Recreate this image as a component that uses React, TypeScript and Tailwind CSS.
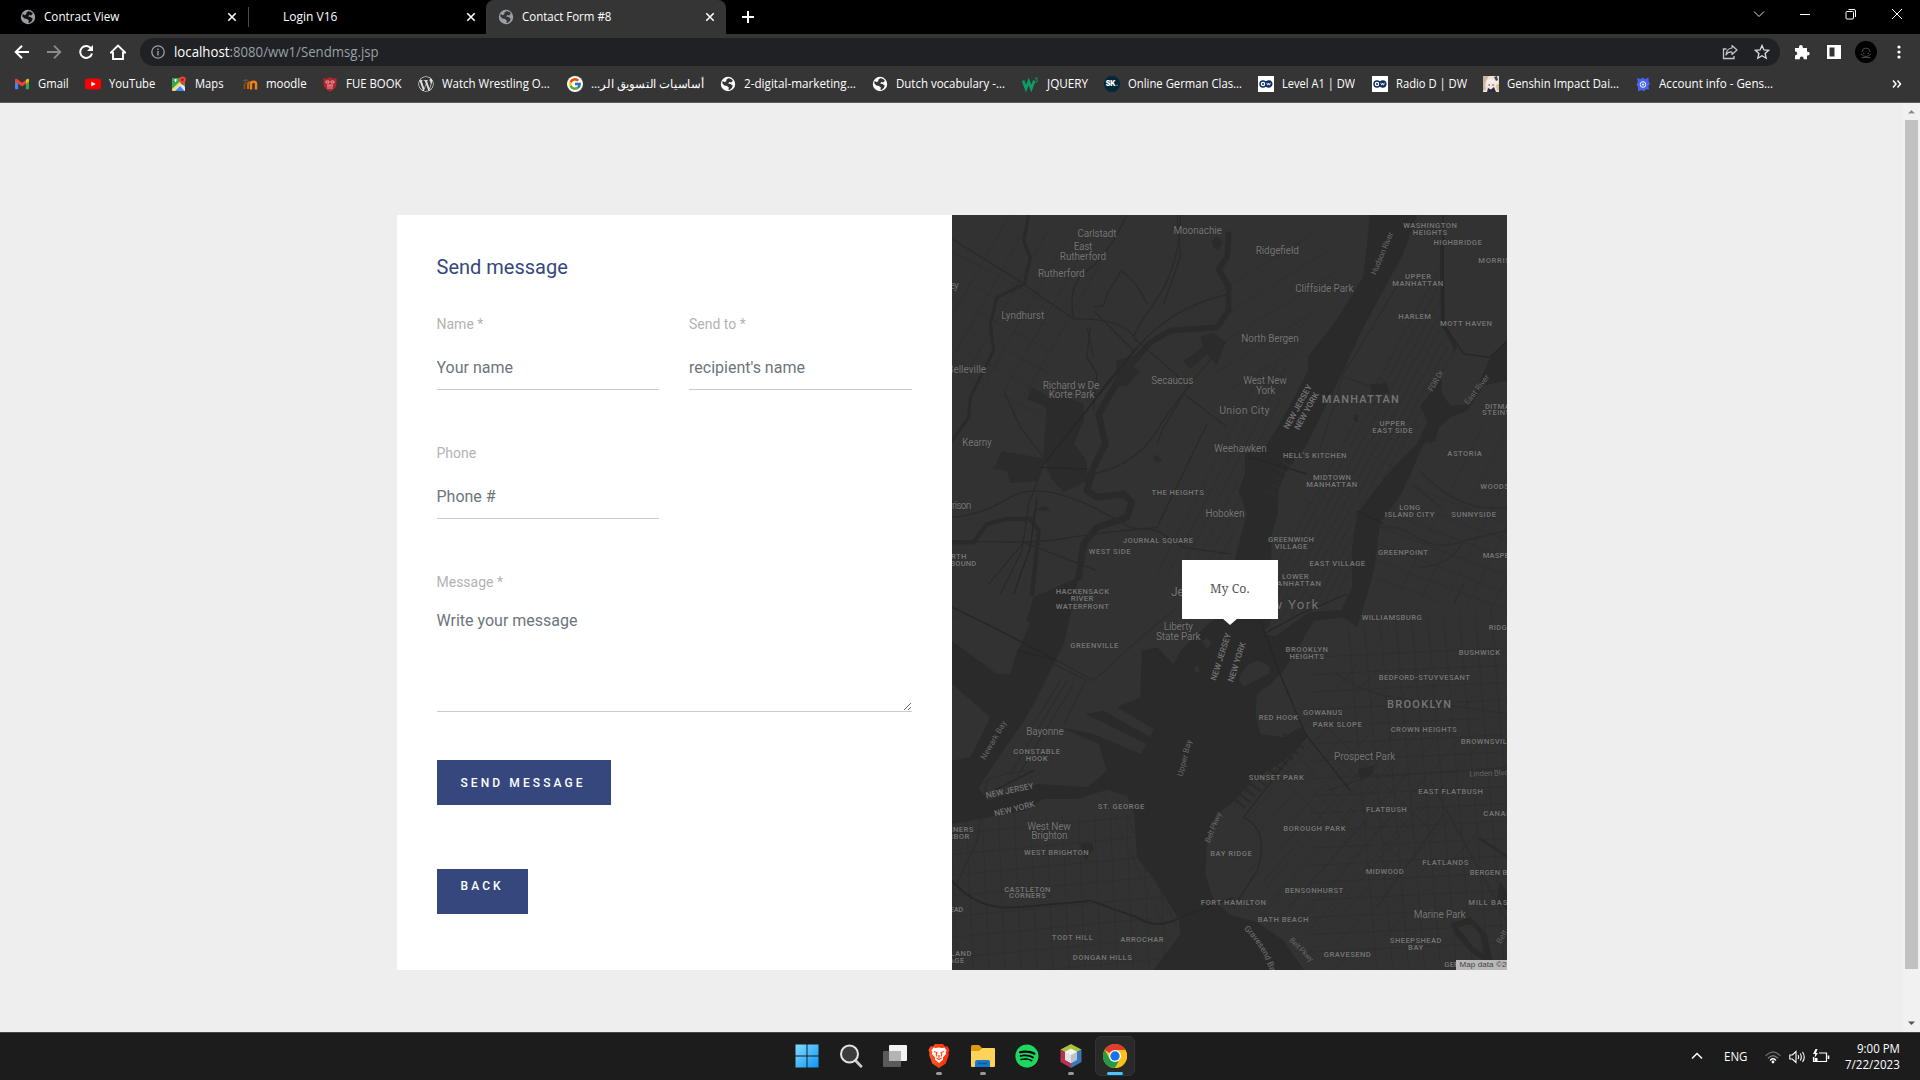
import { useLayoutEffect, useRef, useState, type ReactNode } from "react";
import { FaWordpressSimple, FaSpotify } from "react-icons/fa";
import { FcGoogle } from "react-icons/fc";

/* Text squeezed or stretched horizontally so that it occupies exactly `w` pixels. */
function Fit({ w, children, className = "" }: { w: number; children: ReactNode; className?: string }) {
  const ref = useRef<HTMLSpanElement>(null);
  const [k, setK] = useState(1);
  useLayoutEffect(() => {
    if (ref.current) setK(w / ref.current.offsetWidth);
  }, [w]);
  return (
    <span className={`block shrink-0 whitespace-nowrap ${className}`} style={{ width: w }}>
      <span ref={ref} className="inline-block origin-left" style={{ transform: `scaleX(${k})` }}>
        {children}
      </span>
    </span>
  );
}

/* ---------- browser icons ---------- */

function Globe({ disc, land }: { disc: string; land: string }) {
  return (
    <svg width="16" height="16" viewBox="0 0 16 16" className="shrink-0">
      <circle cx="8" cy="8" r="7.2" fill={disc} />
      <path d="M8.2 2.2c1.8-.3 3.600.8 4.700 2.300L11.200 6.400 9.300 6 8.200 7.400l2.300.7 2.200 1.500-.8 2.300-2.500 2.200-.9-.2.3-2.300-1.800-1.600-2.600-.5L2.200 7.300l.5-2.200L4.900 6.300l1.400-1.200.2-1.600z" fill={land} />
    </svg>
  );
}

function CloseX() {
  return (
    <svg width="16" height="16" viewBox="0 0 16 16" className="shrink-0">
      <path d="M4.300 4.300l7.400 7.400M11.700 4.300l-7.400 7.400" stroke="#fff" strokeWidth="1.600" />
    </svg>
  );
}

function Gmail() {
  return (
    <svg width="16" height="16" viewBox="0 0 16 16" className="shrink-0">
      <path d="M1 4v8.200c0 .6.400 1 1 1h2.200V6.500z" fill="#4285f4" />
      <path d="M15 4v8.200c0 .6-.4 1-1 1h-2.200V6.500z" fill="#34a853" />
      <path d="M11.800 4L13 3.100c.9-.6 2 0 2 1v1.300l-3.200 2.400z" fill="#fbbc04" />
      <path d="M1 4.100c0-1 1.100-1.600 2-1L8 6.800l3.800-2.900v3.800L8 10.600 1 5.400z" fill="#ea4335" />
    </svg>
  );
}

function YouTube() {
  return (
    <svg width="16" height="16" viewBox="0 0 16 16" className="shrink-0">
      <rect x="0" y="2.500" width="16" height="11" rx="3" fill="#f00" />
      <path d="M6.300 5.500v5l4.300-2.500z" fill="#fff" />
    </svg>
  );
}

function Maps() {
  return (
    <svg width="16" height="16" viewBox="0 0 16 16" className="shrink-0">
      <rect x="1" y="2" width="13" height="13" rx="1" fill="#34a853" />
      <path d="M1 13.500L9 6l5 5v4H3z" fill="#e8eaed" />
      <path d="M4 15l5-5 4.500 5z" fill="#4285f4" />
      <path d="M1 13L11 3.500 12.500 5 3 15H2a1 1 0 0 1-1-1z" fill="#fdd663" />
      <path d="M3 4h3M4.500 3v3" stroke="#fff" />
      <path d="M11.500.5a3.300 3.300 0 0 1 3.300 3.300c0 2.500-3.300 5.400-3.300 5.400S8.200 6.300 8.200 3.800A3.300 3.300 0 0 1 11.500.5z" fill="#ea4335" />
      <circle cx="11.500" cy="3.800" r="1.200" fill="#8c1d18" />
    </svg>
  );
}

function Moodle() {
  return (
    <svg width="17" height="16" viewBox="0 0 17 16" className="shrink-0">
      <path d="M1 5l4-2 3 1.500-4 1z" fill="#555" />
      <path d="M3.500 13V7.500" stroke="#8a4d18" strokeWidth="1.800" fill="none" />
      <path d="M7 13V8q0-1.800 2-1.800" stroke="#c46a1a" strokeWidth="2" fill="none" />
      <path d="M10 13.500V7.800q0-2 2.500-2t2.500 2v5.700" stroke="#f98012" strokeWidth="2.400" fill="none" />
      <path d="M3.500 7.500Q5 6 7.500 7" stroke="#8a4d18" strokeWidth="1.300" fill="none" />
    </svg>
  );
}

function Shield() {
  return (
    <svg width="16" height="16" viewBox="0 0 16 16" className="shrink-0">
      <path d="M1.500 2l3 .8L8 1l3.500 1.800 3-.8v5.500c0 4-3 6.500-6.500 8-3.500-1.500-6.500-4-6.500-8z" fill="#b3262d" />
      <path d="M4 5h3v2H4zM9 5h3v2H9zM5 9h6M6 9v4M8 9v4M10 9v4" stroke="#e9b9bb" strokeWidth=".8" fill="none" />
    </svg>
  );
}

function W3() {
  return (
    <svg width="17" height="16" viewBox="0 0 17 16" className="shrink-0">
      <path d="M1 4.500l3 8 2.700-7 2.600 7 3-8" stroke="#0c9d62" strokeWidth="2.700" fill="none" />
      <path d="M13 2h2.500L14 3.800q2 .2 1.500 1.500t-2.500.6" stroke="#0c9d62" strokeWidth=".9" fill="none" />
    </svg>
  );
}

function Sk() {
  return (
    <span className="flex size-4 shrink-0 items-center justify-center rounded-full bg-[#04263a] font-['Inter'] text-[7px] font-black text-white">
      SK<span className="text-[#2bd9a0]">.</span>
    </span>
  );
}

function Dw() {
  return (
    <svg width="16" height="16" viewBox="0 0 16 16" className="shrink-0">
      <rect width="16" height="16" fill="#fff" />
      <circle cx="5" cy="8" r="3" fill="none" stroke="#0d2d63" strokeWidth="1.400" />
      <circle cx="5" cy="8" r="1" fill="#0d2d63" />
      <circle cx="10.800" cy="8" r="3.700" fill="#0d2d63" />
      <path d="M8.800 6.800l.9 2.400.9-2.200.9 2.200.9-2.400" stroke="#fff" strokeWidth=".8" fill="none" />
    </svg>
  );
}

function Genshin() {
  return (
    <svg width="16" height="16" viewBox="0 0 16 16" className="shrink-0">
      <rect width="16" height="16" fill="#efe3d3" />
      <path d="M0 0h6L3 5 2 10l1 3-3 2z" fill="#c9b79f" />
      <path d="M4 6q4-4 8 0v4q-4 4-8 0z" fill="#f8e6dc" />
      <path d="M3 7q2-5 6-4l5 3-1 3-2-3-3 1-3-1-1 3z" fill="#f6f1e8" />
      <path d="M11 1l3-1 1 4-2 1z" fill="#44406b" />
      <path d="M4 16l1-4 3 1.500 3-2.500 2 5z" fill="#2c2848" />
      <circle cx="6.200" cy="9" r=".8" fill="#584b77" />
      <circle cx="10" cy="9" r=".8" fill="#584b77" />
      <path d="M13 9l3-1v6l-2 1z" fill="#d9c08b" />
    </svg>
  );
}

function Lab() {
  return (
    <svg width="16" height="16" viewBox="0 0 16 16" className="shrink-0">
      <path d="M2 2l3.500 1L8 1.500l2 1.700 3.500-1.700.2 4L15 8l-1.600 2 .8 3.500-3.400-.3L9 15.500l-2-1.500-4 1.300L3 11 1.500 8.500 2.800 6z" fill="#4a63ee" />
      <circle cx="8" cy="8.500" r="2.800" fill="none" stroke="#fff" strokeWidth="1" />
      <circle cx="8" cy="8.500" r="1" fill="#fff" />
    </svg>
  );
}

/* ---------- browser chrome ---------- */

function TabStrip() {
  return (
    <div className="flex h-[34px] items-center bg-black text-[12px] text-white">
      <div className="flex h-full w-[248px] items-center pl-5">
        <Globe disc="#9aa0a6" land="#111" />
        <Fit w={75} className="ml-2">Contract View</Fit>
        <div className="ml-[105px]"><CloseX /></div>
      </div>
      <div className="h-5 w-px bg-[#4a4a4a]" />
      <div className="flex h-full w-[237px] items-center pl-[34px]">
        <Fit w={54}>Login V16</Fit>
        <div className="ml-[126px]"><CloseX /></div>
      </div>
      <div className="flex h-full w-[240px] items-center rounded-t-lg bg-[#353535] pl-3">
        <Globe disc="#9aa0a6" land="#353535" />
        <Fit w={89} className="ml-2">Contact Form #8</Fit>
        <div className="ml-[91px]"><CloseX /></div>
      </div>
      <svg width="14" height="14" viewBox="0 0 14 14" className="ml-[15px]">
        <path d="M7 1v12M1 7h12" stroke="#fff" strokeWidth="2" />
      </svg>
      <div className="ml-auto flex h-full items-start pt-2">
        <svg width="12" height="12" viewBox="0 0 12 12" className="mr-[34px]">
          <path d="M1 3.500l5 5 5-5" fill="none" stroke="#ddd" />
        </svg>
        <svg width="12" height="12" viewBox="0 0 12 12" className="mr-[34px]">
          <path d="M1 6.500h10" stroke="#fff" />
        </svg>
        <svg width="12" height="12" viewBox="0 0 12 12" className="mr-[34px]">
          <rect x="1" y="3.500" width="7.500" height="7.500" rx="1" fill="none" stroke="#fff" />
          <path d="M3.500 1.500H9q1.500 0 1.500 1.500v6" fill="none" stroke="#fff" />
        </svg>
        <svg width="12" height="12" viewBox="0 0 12 12" className="mr-[17px]">
          <path d="M1 1l10 10M11 1L1 11" stroke="#fff" />
        </svg>
      </div>
    </div>
  );
}

function AddressBar() {
  return (
    <div className="flex h-9 items-center bg-[#353535] pl-[14px]">
      <svg width="16" height="16" viewBox="0 0 16 16">
        <path d="M15 8H2M8 1.700L1.700 8 8 14.300" fill="none" stroke="#fff" strokeWidth="2" />
      </svg>
      <svg width="16" height="16" viewBox="0 0 16 16" className="ml-4">
        <path d="M1 8h13M8 1.700L14.300 8 8 14.300" fill="none" stroke="#8b8b8b" strokeWidth="1.800" />
      </svg>
      <svg width="16" height="16" viewBox="0 0 16 16" className="ml-4">
        <path d="M13.200 4.600A6 6 0 1 0 14 9.500" fill="none" stroke="#fff" strokeWidth="2" />
        <path d="M15 1v6H9z" fill="#fff" />
      </svg>
      <svg width="16" height="16" viewBox="0 0 16 16" className="ml-4">
        <path d="M.8 8.600L8 1.600l7.200 7H13V15H3V8.600z" fill="none" stroke="#fff" strokeWidth="1.900" />
      </svg>
      <div className="ml-[14px] flex h-7 w-[1640px] items-center rounded-full bg-[#202124] pl-[11px]">
        <svg width="14" height="14" viewBox="0 0 14 14">
          <circle cx="7" cy="7" r="6.200" fill="none" stroke="#9aa0a6" strokeWidth="1.300" />
          <path d="M7 6v4.500M7 3.400v1.500" stroke="#9aa0a6" strokeWidth="1.400" />
        </svg>
        <Fit w={205} className="ml-[9px] text-[14px] leading-5 text-[#9aa0a6]">
          <span className="text-white">localhost</span>:8080/ww1/Sendmsg.jsp
        </Fit>
        <svg width="16" height="16" viewBox="0 0 16 16" className="ml-auto">
          <path d="M4.500 5H1.500v9.500h10.500V12" fill="none" stroke="#c4c7ca" strokeWidth="1.300" />
          <path d="M10 1.500L15 6l-5 4.500V8Q6 7.500 4 11 4.500 4.500 10 4z" fill="none" stroke="#c4c7ca" strokeWidth="1.200" strokeLinejoin="round" />
        </svg>
        <svg width="16" height="16" viewBox="0 0 16 16" className="mr-[10px] ml-4">
          <path d="M8 1.500l1.900 4.400 4.800.4-3.600 3.200 1.100 4.700L8 11.700l-4.200 2.500 1.100-4.700L1.300 6.300l4.800-.4z" fill="none" stroke="#dadce0" strokeWidth="1.300" />
        </svg>
      </div>
      <svg width="16" height="16" viewBox="0 0 16 16" className="ml-[14px]">
        <path d="M1 4h4V3a1.900 1.900 0 0 1 3.800 0v1H13v3.700h.8a1.900 1.900 0 0 1 0 3.800H13V15.200H9.600v-.8a1.900 1.900 0 0 0-3.800 0v.8H1v-4h.8a1.900 1.900 0 0 0 0-3.700H1z" fill="#fff" />
      </svg>
      <svg width="16" height="16" viewBox="0 0 16 16" className="ml-4">
        <path d="M1 1h14v14H1zM3.500 3.500v9h5v-9z" fill="#fff" fillRule="evenodd" />
      </svg>
      <div className="ml-[13px] flex size-[22px] items-center justify-center rounded-full bg-black">
        <svg width="14" height="14" viewBox="0 0 14 14" fill="none" stroke="#484848">
          <path d="M3 7q0-4 4-4t4 4M2 9q5 5 10 0M4 8.500h1.500M8.500 8.500H10M2.500 12.500h9" />
        </svg>
      </div>
      <svg width="4" height="16" viewBox="0 0 4 16" className="ml-5" fill="#fff">
        <circle cx="2" cy="3" r="1.600" />
        <circle cx="2" cy="8" r="1.600" />
        <circle cx="2" cy="13" r="1.600" />
      </svg>
    </div>
  );
}

const bookmarks: { label: string; w: number; slot: string; icon: ReactNode; rtl?: boolean }[] = [
  { label: "Gmail", w: 31, slot: "w-[71px]", icon: <Gmail /> },
  { label: "YouTube", w: 46, slot: "w-[86px]", icon: <YouTube /> },
  { label: "Maps", w: 29, slot: "w-[70px]", icon: <Maps /> },
  { label: "moodle", w: 41, slot: "w-[81px]", icon: <Moodle /> },
  { label: "FUE BOOK", w: 56, slot: "w-[96px]", icon: <Shield /> },
  {
    label: "Watch Wrestling O...",
    w: 108,
    slot: "w-[149px]",
    icon: <FaWordpressSimple className="size-4 shrink-0 rounded-full bg-[#333] text-[#dcdcdc]" />,
  },
  {
    label: "أساسيات التسويق الر...",
    w: 113,
    slot: "w-[153px]",
    rtl: true,
    icon: (
      <span className="flex size-4 shrink-0 items-center justify-center rounded-full bg-white">
        <FcGoogle className="size-[14px]" />
      </span>
    ),
  },
  { label: "2-digital-marketing...", w: 112, slot: "w-[152px]", icon: <Globe disc="#fff" land="#353535" /> },
  { label: "Dutch vocabulary -...", w: 109, slot: "w-[150px]", icon: <Globe disc="#fff" land="#353535" /> },
  { label: "JQUERY", w: 41, slot: "w-[82px]", icon: <W3 /> },
  { label: "Online German Clas...", w: 114, slot: "w-[154px]", icon: <Sk /> },
  { label: "Level A1 | DW", w: 73, slot: "w-[114px]", icon: <Dw /> },
  { label: "Radio D | DW", w: 71, slot: "w-[111px]", icon: <Dw /> },
  { label: "Genshin Impact Dai...", w: 112, slot: "w-[152px]", icon: <Genshin /> },
  { label: "Account info - Gens...", w: 114, slot: "w-[200px]", icon: <Lab /> },
];

function BookmarksBar() {
  return (
    <div className="flex h-[33px] items-center border-b border-[#5c5c5c] bg-[#353535] pb-1 pl-[14px] text-[12px] leading-4 text-white">
      {bookmarks.map((b, i) => (
        <div key={i} className={`flex shrink-0 items-center gap-2 ${b.slot}`}>
          {b.icon}
          <Fit w={b.w}>
            <span dir={b.rtl ? "rtl" : "ltr"} className="inline-block">
              {b.label}
            </span>
          </Fit>
        </div>
      ))}
      <svg width="10" height="10" viewBox="0 0 10 10" className="mr-[18px] ml-auto">
        <path d="M1 1.500L4 5 1 8.500M5.500 1.500l3 3.500-3 3.500" fill="none" stroke="#fff" strokeWidth="1.500" />
      </svg>
    </div>
  );
}

/* ---------- contact form ---------- */

function Field({ label, placeholder }: { label: string; placeholder: string }) {
  return (
    <label className="block">
      <span className="block h-[21px] text-[14px] leading-[21px] text-[#b3b3b3]">{label}</span>
      <input
        placeholder={placeholder}
        className="mt-2 block h-[47px] w-full border-b border-[#ccc] bg-transparent pt-0.5 text-[16px] outline-none placeholder:text-[#6c757d]"
      />
    </label>
  );
}

function ContactForm() {
  return (
    <div className="w-[555px] bg-white px-10 pt-10 font-['Roboto']">
      <h3 className="h-6 text-[20px] leading-6 text-[#35477d]">Send message</h3>
      <div className="mt-[35px] grid grid-cols-2 gap-x-[30px] gap-y-[53px]">
        <Field label="Name *" placeholder="Your name" />
        <Field label="Send to *" placeholder="recipient's name" />
        <Field label="Phone" placeholder="Phone #" />
      </div>
      <label className="mt-[53px] block">
        <span className="block h-[21px] text-[14px] leading-[21px] text-[#b3b3b3]">Message *</span>
        <textarea
          placeholder="Write your message"
          className="mt-2 block h-[111px] w-full resize-y border-b border-[#ccc] bg-transparent pt-2 text-[16px] leading-6 outline-none placeholder:text-[#6c757d]"
        />
      </label>
      <button className="mt-12 flex h-[45px] w-[174px] items-center bg-[#35477d] pl-6 text-[12px] font-medium tracking-[3.1px] text-white">
        SEND MESSAGE
      </button>
      <a className="mt-16 flex h-[45px] w-[91px] items-start bg-[#35477d] pt-2 pl-6 text-[12px] leading-[18px] font-medium tracking-[3.1px] text-white">
        BACK
      </a>
    </div>
  );
}

/* ---------- map ---------- */

type Label = [text: string, cx: number, cy: number, width: number, size?: number, rotate?: number];

const NW: Label[] = [
  ["Carlstadt", 440, 57, 117, 30],
  ["Moonachie", 742, 50, 145, 30],
  ["East", 398, 98, 56, 30],
  ["Rutherford", 398, 127, 139, 30],
  ["Rutherford", 333, 177, 140, 30],
  ["ey", 12, 215, 26, 30],
  ["Lyndhurst", 217, 304, 129, 30],
  ["Belleville", 49, 465, 117, 30],
  ["Richard w De", 362, 513, 170, 30],
  ["Korte Park", 364, 542, 137, 30],
  ["Secaucus", 666, 499, 126, 30],
  ["Kearny", 80, 685, 89, 30],
  ["rison", 34, 875, 58, 30],
  ["THE HEIGHTS", 682, 834, 157],
  ["JOURNAL SQUARE", 623, 979, 211],
  ["WEST SIDE", 478, 1013, 125],
  ["NORTH", 8, 1028, 80],
  ["BOUND", 39, 1049, 78],
  ["HACKENSACK", 396, 1132, 160],
  ["RIVER", 395, 1154, 68],
  ["WATERFRONT", 396, 1176, 160],
];

const NE: Label[] = [
  ["Ridgefield", 147, 109, 130, 30],
  ["Cliffside Park", 288, 222, 175, 30],
  ["North Bergen", 125, 372, 172, 30],
  ["West New", 110, 499, 131, 30],
  ["York", 112, 528, 58, 30],
  ["Union City", 48, 588, 151, 32],
  ["Weehawken", 36, 703, 158, 30],
  ["Hoboken", -10, 897, 117, 30],
  ["WASHINGTON", 605, 34, 161],
  ["HEIGHTS", 605, 55, 103],
  ["HIGHBRIDGE", 688, 86, 145],
  ["MORRISANIA", 828, 138, 156],
  ["UPPER", 569, 187, 78],
  ["MANHATTAN", 568, 209, 153],
  ["HARLEM", 559, 308, 98],
  ["MOTT HAVEN", 713, 329, 156],
  ["MANHATTAN", 396, 555, 231, 33],
  ["UPPER", 492, 628, 77],
  ["EAST SIDE", 492, 650, 121],
  ["DITMARS", 822, 576, 104],
  ["STEINWAY", 822, 596, 122],
  ["ASTORIA", 709, 718, 104],
  ["HELL'S KITCHEN", 259, 725, 190],
  ["MIDTOWN", 311, 791, 114],
  ["MANHATTAN", 310, 812, 153],
  ["WOODSIDE", 818, 816, 124],
  ["LONG", 544, 879, 63],
  ["ISLAND CITY", 544, 901, 149],
  ["SUNNYSIDE", 736, 901, 134],
  ["GREENWICH", 188, 976, 138],
  ["VILLAGE", 188, 997, 98],
  ["GREENPOINT", 524, 1015, 150],
  ["MASPETH", 818, 1024, 110],
  ["EAST VILLAGE", 327, 1049, 167],
  ["LOWER", 201, 1087, 80],
  ["MANHATTAN", 201, 1108, 153],
  ["Hudson River", 461, 118, 136, 24, -67],
  ["NEW JERSEY", 208, 578, 148, 25, -61],
  ["NEW YORK", 234, 591, 124, 25, -61],
  ["FDR Dr", 622, 500, 68, 24, -60],
  ["East River", 745, 526, 106, 24, -52],
];

const SW: Label[] = [
  ["Jersey City", 748, 6, 172, 36],
  ["Liberty", 684, 110, 88, 30],
  ["State Park", 684, 139, 134, 30],
  ["GREENVILLE", 432, 166, 144],
  ["Bayonne", 284, 425, 113, 30],
  ["CONSTABLE", 259, 485, 141],
  ["HOOK", 259, 506, 65],
  ["ST. GEORGE", 512, 650, 140],
  ["West New", 296, 708, 131, 30],
  ["Brighton", 297, 737, 109, 30],
  ["WEST BRIGHTON", 318, 787, 194],
  ["MARINERS", 8, 718, 122],
  ["HARBOR", 8, 739, 98],
  ["CASTLETON", 231, 897, 139],
  ["CORNERS", 231, 917, 110],
  ["MEAD", 10, 959, 58],
  ["TODT HILL", 366, 1043, 123],
  ["ARROCHAR", 575, 1049, 130],
  ["DONGAN HILLS", 456, 1101, 177],
  ["ISLAND", 20, 1090, 87],
  ["VILLAGE", -8, 1111, 100],
  ["Newark Bay", 129, 450, 130, 24, -60],
  ["NEW JERSEY", 178, 601, 146, 25, -12],
  ["NEW YORK", 192, 656, 124, 25, -14],
  ["Upper Bay", 702, 504, 112, 24, -76],
  ["NEW JERSEY", 811, 200, 148, 25, -72],
  ["Belt Pkwy", 788, 712, 96, 24, -68],
];

const SE: Label[] = [
  ["New York", 172, 43, 196, 40],
  ["WILLIAMSBURG", 490, 82, 180],
  ["RIDGEWOOD", 850, 113, 138],
  ["BROOKLYN", 235, 177, 127],
  ["HEIGHTS", 235, 198, 103],
  ["BUSHWICK", 753, 188, 124],
  ["BEDFORD-STUYVESANT", 588, 263, 274],
  ["BROOKLYN", 572, 343, 192, 33],
  ["GOWANUS", 283, 367, 118],
  ["RED HOOK", 150, 383, 118],
  ["PARK SLOPE", 327, 403, 147],
  ["CROWN HEIGHTS", 586, 417, 198],
  ["BROWNSVILLE", 780, 453, 166],
  ["Prospect Park", 409, 499, 184, 30],
  ["Linden Blvd", 782, 549, 118, 24, -2],
  ["SUNSET PARK", 144, 562, 165],
  ["EAST FLATBUSH", 667, 603, 194],
  ["FLATBUSH", 474, 659, 122],
  ["CANARSIE", 826, 670, 122],
  ["BOROUGH PARK", 258, 716, 187],
  ["BAY RIDGE", 8, 790, 125],
  ["FLATLANDS", 651, 818, 139],
  ["MIDWOOD", 469, 843, 114],
  ["BERGEN BEACH", 812, 848, 176],
  ["BENSONHURST", 257, 900, 175],
  ["FORT HAMILTON", 15, 938, 196],
  ["MILL BASIN", 792, 938, 145],
  ["Marine Park", 634, 973, 156, 30],
  ["BATH BEACH", 164, 988, 152],
  ["SHEEPSHEAD", 562, 1051, 155],
  ["BAY", 562, 1072, 46],
  ["GRAVESEND", 357, 1092, 141],
  ["GERRITSEN", 710, 1124, 124],
  ["NEW YORK", 25, 216, 124, 25, -72],
  ["Belt Pkwy", 220, 1079, 92, 24, 45],
  ["Belt", 820, 1040, 42, 24, -60],
];

/* Weight and tone follow the kind of place: districts, boroughs, borders, roads and water. */
function Labels({ items, dx, dy }: { items: Label[]; dx: number; dy: number }) {
  return (
    <g transform={`translate(${dx} ${dy})`}>
      {items.map(([t, cx, cy, w, size = 23, rot = 0], i) => (
        <text
          key={i}
          transform={`translate(${cx} ${cy}) rotate(${rot})`}
          x={-w / 2}
          y={size * 0.355}
          textLength={w}
          fontSize={size}
          fontWeight={size === 23 || size === 33 ? 600 : size === 25 ? 500 : 400}
          fill={size === 24 ? "#686868" : undefined}
        >
          {t}
        </text>
      ))}
    </g>
  );
}

/* Parallel street lines: start point, direction, spacing step, count. */
function streets(x: number, y: number, dx: number, dy: number, sx: number, sy: number, n: number) {
  let d = "";
  for (let i = 0; i < n; i++) d += `M${x + sx * i} ${y + sy * i}l${dx} ${dy}`;
  return d;
}

function CityMap() {
  return (
    <svg width="555" height="755" viewBox="5 3 1665 2265" className="block bg-[#323232] font-['Roboto']">
      <defs>
        <clipPath id="manhattan">
          <path d="M1389 3L1314 200 1240 340 1150 520 1080 690 1000 790 970 1000 960 1230 1090 1190 1200 1120 1220 900 1330 770 1420 620 1470 500 1500 430 1470 250 1480 3z" />
        </clipPath>
        <clipPath id="brooklyn">
          <path d="M1060 1330L1200 1230 1670 1180V2268H1100L830 2100 840 1760 1060 1560z" />
        </clipPath>
        <clipPath id="queens">
          <path d="M1670 560L1500 640 1290 920 1280 1130 1670 1200z" />
        </clipPath>
        <clipPath id="staten">
          <path d="M5 1830L300 1760 470 1725 560 1800 590 1960 690 2110 640 2268H5z" />
        </clipPath>
        <clipPath id="jersey">
          <path d="M5 3H1240L1050 400 860 900 830 1100 600 1250 400 1400 5 1000z" />
        </clipPath>
        <path id="gravesend" d="M880 2145Q960 2220 970 2330" />
      </defs>

      <g fill="none" stroke="#2d2d2d" strokeWidth="2">
        <g clipPath="url(#manhattan)">
          <path d={streets(900, 1200, 680, -1240, 21, 8, 16)} />
          <path d={streets(900, 1130, 420, 230, 17, -31, 38)} strokeWidth="1" />
          <path d="M1350 200L1180 480 1110 700M1160 480L1320 540" strokeWidth="4" />
        </g>
        <g clipPath="url(#brooklyn)">
          <path d={streets(760, 1880, 560, -640, 42, 34, 9)} />
          <path d={streets(800, 1500, 480, 480, 36, -22, 6)} strokeWidth="1.500" />
          <path d={streets(1190, 1180, 90, 1100, 48, 0, 12)} />
          <path d={streets(1080, 1330, 620, -30, 0, 52, 18)} strokeWidth="1.500" />
          <path d={streets(860, 2050, 420, -470, 34, 30, 10)} strokeWidth="1.500" />
          <path d="M1160 1380Q1250 1440 1330 1450T1670 1500M1130 1730L1250 1690 1670 1660M1480 1800L1280 2080M1440 1700L1670 2120" strokeWidth="4" />
        </g>
        <g clipPath="url(#queens)">
          <path d={streets(1280, 780, 420, 160, 0, 52, 9)} />
          <path d={streets(1340, 1150, 260, -520, 60, 30, 8)} strokeWidth="1.500" />
          <path d="M1290 940Q1340 930 1400 970T1540 980L1670 950M1540 980Q1500 1060 1400 1060M1400 760Q1520 900 1670 880M1540 1110Q1500 1180 1480 1268M1300 760L1400 820 1470 880" strokeWidth="5" />
        </g>
        <g clipPath="url(#staten)">
          <path d={streets(0, 1800, 20, 460, 48, 0, 14)} strokeWidth="1.500" />
          <path d={streets(0, 1860, 640, -60, 0, 62, 8)} strokeWidth="1.500" />
          <path d={streets(460, 1740, 190, 420, 34, -10, 4)} />
          <path d="M5 2000Q80 2090 200 2080T420 2060L560 2110Q620 2150 690 2110" stroke="#272727" strokeWidth="6" />
        </g>
        <g clipPath="url(#jersey)">
          <path d={streets(-60, 420, 240, -420, 56, 26, 6)} />
          <path d={streets(0, 110, 300, 160, 0, 70, 6)} strokeWidth="1.500" />
          <path d={streets(620, 1080, 330, -640, 28, 10, 8)} strokeWidth="1.500" />
          <path d={streets(700, 300, 420, -260, 30, 60, 5)} strokeWidth="1.500" />
          <path d={streets(920, 480, 130, 90, 10, -16, 12)} strokeWidth="1" />
          <path d="M5 75L190 190 370 315Q520 310 560 380L720 520M690 3Q690 160 610 270T560 380M590 270Q560 200 510 170M370 315Q350 210 410 170T530 3M680 3L690 130 640 270M430 290L550 410M840 240Q680 270 570 390T410 590L280 750 235 870 215 1010 150 1140M430 780Q560 750 620 650T830 380M830 640L700 540 640 640 620 690M280 730L410 765M5 910Q100 900 180 850T430 880L540 940 620 950 700 1000 840 1020M5 980Q250 990 330 975T620 940L770 630M430 430L410 340 M410 430L440 480 430 590M160 530L210 640 280 730M90 1140L220 985 440 1070" stroke="#2a2a2a" strokeWidth="4" />
        </g>
        <path d="M330 1400L230 1560M350 1400L180 1680M370 1410L200 1690M400 1410L340 1530M320 1340L430 1400 560 1280 680 1180M5 1210L210 1300 410 1400M110 1700L80 1880 20 2010M110 1700Q170 1670 250 1670" strokeWidth="4" />
      </g>

      {/* rivers and creeks */}
      <g fill="none" stroke="#2a2a2a" strokeLinejoin="round" strokeLinecap="round">
        <path d="M235 3L220 80 240 130 222 210 140 250 120 330 130 410 60 550 55 610 5 680" strokeWidth="9" />
        <path d="M835 60L830 130 805 165 835 220 835 290 800 340 660 350 600 385 560 430" strokeWidth="17" />
        <path d="M560 430L520 470 480 540 445 600 465 690 425 770 410 830 440 850 520 840 545 865 530 910 440 940 400 990 385 1090" strokeWidth="20" />
        <path d="M5 985H70L110 930 170 915 240 915 265 950 255 1050 245 1140" strokeWidth="13" />
        <path d="M510 175L470 240 460 275 430 280M420 340L410 430 440 480" strokeWidth="4" />
        <path d="M1475 85L1475 180 1478 330 1515 400 1510 450" strokeWidth="12" />
      </g>
      <path
        d="M500 440L560 420 550 460 570 470 530 515 495 515zM290 560L340 545 400 570 400 620 370 690 410 740 410 800 340 835 300 790 280 720zM230 555L245 520 310 560 300 600 280 575zM130 765L155 712 290 735 260 800 180 808 170 770zM250 890L280 875 302 890zM700 440L760 400 750 370 790 355 825 385 800 455 770 420 720 465zM785 80L800 65 818 85 805 110 788 98zM610 728L620 722 635 738 618 748z"
        fill="#2b2b2b"
      />
      <g fill="#2a2a2a">
        <path d="M1259 3H1400L1354 130 1314 200 1234 350 1174 480 1104 620 1064 700 1009 770 984 830 982 900 964 960 960 1230 934 1258 975 1268 1074 1195 1174 1188 1205 1120 1205 1000 1220 900 1264 840 1330 760 1400 690 1430 625 1410 575 1454 520 1510 440 1525 470 1490 490 1475 540 1500 575 1560 570 1615 440 1670 380V500L1600 515 1550 590 1500 610 1466 640 1455 680 1430 690 1360 830 1290 925 1270 1070 1245 1160 1220 1240 1180 1210 1090 1220 1050 1290 1000 1370 960 1410 920 1440 915 1500 930 1560 1000 1570 1050 1540 1070 1570 1000 1640 920 1690 840 1770 800 1800 770 1870 765 1980 790 2060 840 2103 920 2125 1000 2180 1060 2268H610L690 2160 685 2115 620 2010 560 1930 552 1800 530 1745 470 1727 380 1755 280 1755 220 1790 5 1830V1640L60 1630 120 1510 5 1410V1280L140 1380 180 1380 250 1150 385 1090 340 1290 300 1370 255 1460 215 1530 165 1600 85 1720 110 1760 260 1710 410 1720 470 1670 445 1590 330 1540 430 1560 570 1620 590 1590 405 1500 460 1490 600 1570 610 1545 500 1480 570 1450 575 1310 620 1300 670 1350 690 1310 780 1225 830 1190 850 1050 890 900 864 830 884 780 884 720 944 700 994 620 1074 470 1074 425 1150 330 1239 190z" />
        <path d="M1260 510L1310 508 1316 535 1265 545zM1212 600L1225 605 1222 625 1210 618zM1225 1665L1270 1655 1268 1680 1230 1695zM390 1890L425 1885 430 1905 405 1940z" />
        <path d="M1590 1870l90 60v8l-95-62zM1500 2130l60-20 50 50 20 100-60-40-50-50zM1650 2000l30 50-10 40-30-40z" />
      </g>
      <g fill="#323232">
        <path d="M865 1400Q880 1350 920 1340Q970 1350 955 1380L880 1418zM755 1280l15-8 12 15-12 20zM730 1360l12-5 8 15-12 8zM1300 960L1420 690 1438 680 1425 740 1370 850zM1475 480L1520 400 1570 430 1540 500 1500 560 1475 540z" />
        <path d="M1520 2140l40-10 30 30 10 60-30-20-30-40z" />
        <path d="M20 1280L5 1265V1215L100 1190 180 1180 240 1230 170 1380 140 1370z" />
      </g>
      <path d={streets(1000, 1560, 60, 44, -16, 16, 12)} stroke="#2a2a2a" strokeWidth="6" />
      <path d={streets(1020, 700, 44, 22, -12, 22, 7)} stroke="#323232" strokeWidth="3" />

      {/* bridges, tunnels and expressways over the water */}
      <g fill="none" strokeWidth="4">
        <path d="M690 2110L850 2050M930 1220L985 1370 1065 1560 1200 1730M940 1260L1050 1200 1190 1140M900 730L1070 780M320 1340L200 1310M250 1670L110 1740M1220 890L1300 930M1478 3V330L1540 420 1620 430 1670 380M280 750L400 600 560 400M265 760L410 765M260 850L240 1000 190 1140M5 1180L130 1240 320 1340" stroke="#262626" />
        <path d="M1065 1570L880 1810Q960 1850 920 1970L850 2080" stroke="#292929" />
      </g>

      <g fill="#747474" stroke="#2b2b2b" strokeWidth="2" paintOrder="stroke">
        <Labels items={NW} dx={0} dy={0} />
        <Labels items={NE} dx={834} dy={0} />
        <Labels items={SW} dx={0} dy={1128} />
        <Labels items={SE} dx={834} dy={1128} />
        <text fontSize="25">
          <textPath href="#gravesend">Gravesend Bay</textPath>
        </text>
      </g>
    </svg>
  );
}

function MapPanel() {
  return (
    <div className="relative w-[555px] overflow-hidden">
      <CityMap />
      <div className="absolute top-[345px] left-[230px] flex h-[59px] w-[96px] items-center justify-center bg-white pb-px text-[#555]">
        <Fit w={39} className="font-['Noto_Serif','DejaVu_Serif',serif] text-[12px]">My Co.</Fit>
        <svg width="16" height="7" viewBox="0 0 16 7" className="absolute top-[58px] left-10">
          <path d="M0 0h16L8 7z" fill="#fff" />
        </svg>
      </div>
      <div className="absolute right-0 bottom-0 h-[10px] w-[51px] overflow-hidden bg-[#b9b9b9] pl-1 font-['Liberation_Sans'] text-[8px] leading-[10px] whitespace-nowrap text-[#444]">
        <span className="tracking-[0.1px]">Map data ©2023</span>
      </div>
    </div>
  );
}

/* ---------- page scrollbar ---------- */

function Scrollbar() {
  return (
    <div className="flex w-[17px] flex-col items-center bg-[#f1f1f1]">
      <svg width="17" height="17" viewBox="0 0 17 17">
        <path d="M5 10.500h7L8.500 7z" fill="#8c8c8c" />
      </svg>
      <div className="h-[849px] w-[13px] bg-[#c1c1c1]" />
      <svg width="17" height="17" viewBox="0 0 17 17" className="mt-auto">
        <path d="M5 6.500h7L8.500 10z" fill="#505050" />
      </svg>
    </div>
  );
}

/* ---------- taskbar ---------- */

function Brave() {
  return (
    <svg width="22" height="24" viewBox="0 0 22 24">
      <defs>
        <linearGradient id="brave" x2="1">
          <stop stopColor="#ff5a1f" />
          <stop offset="1" stopColor="#ff2a0a" />
        </linearGradient>
      </defs>
      <path d="M7 0h8l2 2.500 2.500-.3L21.500 6l-1 3 .3 2-3 8.500L11 24l-6.800-4.500L1.200 11l.3-2-1-3 2-3.800L5 2.500z" fill="url(#brave)" />
      <path d="M11 3.500l3 .6 2.600-.6 2 3.200-1 1 .5 2.300-3.300 3.500.3 2L11 19l-4.100-3.500.3-2L3.900 10l.5-2.300-1-1 2-3.200 2.600.6z" fill="#fff" />
      <path d="M6 7.500l3 1-.8 2 .8 2M16 7.500l-3 1 .8 2-.8 2M8.500 14l2.500 1.500 2.500-1.500M11 11v3" stroke="#ff4a18" strokeWidth="1.200" fill="none" />
    </svg>
  );
}

function Chrome() {
  return (
    <svg width="24" height="24" viewBox="0 0 24 24">
      <circle cx="12" cy="12" r="12" fill="#fbc116" />
      <path d="M12 12L1.600 6A12 12 0 0 1 22.400 6z" fill="#e33b2e" />
      <path d="M12 12l5.200 3L12 24A12 12 0 0 1 1.600 6l5.200 9z" fill="#229a48" />
      <path d="M12 6h10.400A12 12 0 0 1 12 24l5.200-9z" fill="#fbc116" />
      <circle cx="12" cy="12" r="6" fill="#fff" />
      <circle cx="12" cy="12" r="4.700" fill="#1a73e8" />
    </svg>
  );
}

function TaskButton({ children, dot, active }: { children: ReactNode; dot?: boolean; active?: boolean }) {
  return (
    <div
      className={
        active
          ? "relative flex size-10 items-center justify-center rounded-md border border-[#343434] bg-[#292929]"
          : "relative flex size-10 items-center justify-center"
      }
    >
      {children}
      {dot && <span className="absolute bottom-[1px] left-[17px] h-[3px] w-1.5 rounded-full bg-[#999]" />}
      {active && <span className="absolute bottom-0 left-[11px] h-[3px] w-4 rounded-full bg-[#4cc2ff]" />}
    </div>
  );
}

function Taskbar() {
  return (
    <div className="flex h-12 border-t border-[#454545] bg-[#1c1c1c] text-white">
      <div className="ml-[787px] flex gap-1 pt-[3px]">
        <TaskButton>
          <svg width="24" height="24" viewBox="0 0 24 24">
            <defs>
              <linearGradient id="win" x2="1" y2="1">
                <stop stopColor="#84dcff" />
                <stop offset="1" stopColor="#0a95f5" />
              </linearGradient>
            </defs>
            <path d="M.5.500h11v11H.5zM12.500.500h11v11h-11zM.5 12.500h11v11H.5zM12.500 12.500h11v11h-11z" fill="url(#win)" />
          </svg>
        </TaskButton>
        <TaskButton>
          <svg width="24" height="24" viewBox="0 0 24 24" fill="none">
            <path d="M16.500 16.500l5.500 5.800" stroke="#c8ccd0" strokeWidth="2.800" strokeLinecap="round" />
            <circle cx="10.500" cy="10" r="8.500" fill="#3b3b3b" stroke="#e3e3e3" strokeWidth="2" />
          </svg>
        </TaskButton>
        <TaskButton>
          <svg width="24" height="24" viewBox="0 0 24 24">
            <rect x="0" y="7" width="18" height="16" rx="1" fill="#5a5a5a" />
            <rect x="6" y="1" width="18" height="16" rx="1" fill="#f2f2f2" />
            <rect x="6" y="7" width="12" height="10" fill="#b4b4b4" />
          </svg>
        </TaskButton>
        <TaskButton dot><Brave /></TaskButton>
        <TaskButton dot>
          <svg width="24" height="24" viewBox="0 0 24 24">
            <path d="M0 2.500Q0 1 1.500 1H8l3 3-3 4H0z" fill="#e09b0c" />
            <path d="M0 7h8l3-3h12q1 0 1 1v17q0 1-1 1H1q-1 0-1-1z" fill="#ffd35a" />
            <path d="M4 23v-5q0-2 2-2h11q2 0 2 2v5z" fill="#1878cc" />
            <path d="M7 19.500h9" stroke="#0d57a1" strokeWidth="1.500" />
          </svg>
        </TaskButton>
        <TaskButton>
          <span className="flex size-[23px] items-center justify-center rounded-full bg-black">
            <FaSpotify className="size-6 shrink-0 text-[#1ed760]" />
          </span>
        </TaskButton>
        <TaskButton dot>
          <svg width="24" height="24" viewBox="0 0 24 24">
            <path d="M12 0l10.500 5.500L12 12 1.500 5.500z" fill="#a6c23e" />
            <path d="M1.500 5.500L12 12v12L1.500 18z" fill="#b83255" />
            <path d="M22.500 5.500L12 12v12l10.500-6z" fill="#3b76b8" />
            <path d="M12 4.500l6 3.200v8L12 19l-6-3.300v-8z" fill="#f3f3ec" />
            <path d="M12 11l6-3.300v8L12 19z" fill="#bac2c9" />
            <path d="M12 11L6 7.700v8l6 3.300z" fill="#dfe3e5" />
          </svg>
        </TaskButton>
        <TaskButton active><Chrome /></TaskButton>
      </div>

      <div className="ml-auto flex h-full items-center pr-5">
        <svg width="12" height="8" viewBox="0 0 12 8" className="mb-0.5">
          <path d="M1 6.500L6 1.500l5 5" fill="none" stroke="#fff" strokeWidth="1.500" />
        </svg>
        <Fit w={23} className="ml-[21px] text-[12px] leading-4">ENG</Fit>
        <svg width="16" height="14" viewBox="0 0 16 14" className="ml-[18px]" fill="none" strokeLinecap="round">
          <path d="M1 5.500q7-7 14 0" stroke="#666" strokeWidth="1.300" />
          <path d="M3.300 8q4.700-4.600 9.400 0" stroke="#777" strokeWidth="1.300" />
          <path d="M5.500 10q2.500-2.300 5 0" stroke="#fff" strokeWidth="1.400" />
          <circle cx="8" cy="12" r="1.400" fill="#fff" />
        </svg>
        <svg width="17" height="14" viewBox="0 0 17 14" className="ml-2" fill="none" stroke="#fff" strokeWidth="1.100">
          <path d="M.8 5h2.500L7 1.500v11L3.300 9H.8zM9 5q1.200 2 0 4M11.200 3.500q2.300 3.500 0 7M13.500 2q3.500 5 0 10" />
        </svg>
        <svg width="18" height="15" viewBox="0 0 18 15" className="mr-px ml-[6px]" fill="none">
          <path d="M7 4h7.500v8.500H1.500V8" stroke="#fff" strokeWidth="1.200" />
          <path d="M16.500 6.500v3.500" stroke="#fff" strokeWidth="1.600" />
          <path d="M3.500 0L1 5h2.200L2.500 9 6 4H4L5.500 0zM2.500 9h3V12h-3z" fill="#fff" />
        </svg>
        <div className="ml-[6px] flex w-[63px] flex-col items-end text-[12px] leading-4">
          <Fit w={43}>9:00 PM</Fit>
          <Fit w={55}>7/22/2023</Fit>
        </div>
      </div>
    </div>
  );
}

export default function App() {
  return (
    <div className="flex h-[1080px] w-[1920px] flex-col overflow-hidden bg-[#eee] font-['Open_Sans','Noto_Sans',sans-serif]">
      <TabStrip />
      <AddressBar />
      <BookmarksBar />
      <div className="flex min-h-0 flex-1">
        <main className="flex flex-1 items-start justify-center pt-28">
          <div className="flex h-[755px] w-[1110px]">
            <ContactForm />
            <MapPanel />
          </div>
        </main>
        <Scrollbar />
      </div>
      <Taskbar />
    </div>
  );
}
